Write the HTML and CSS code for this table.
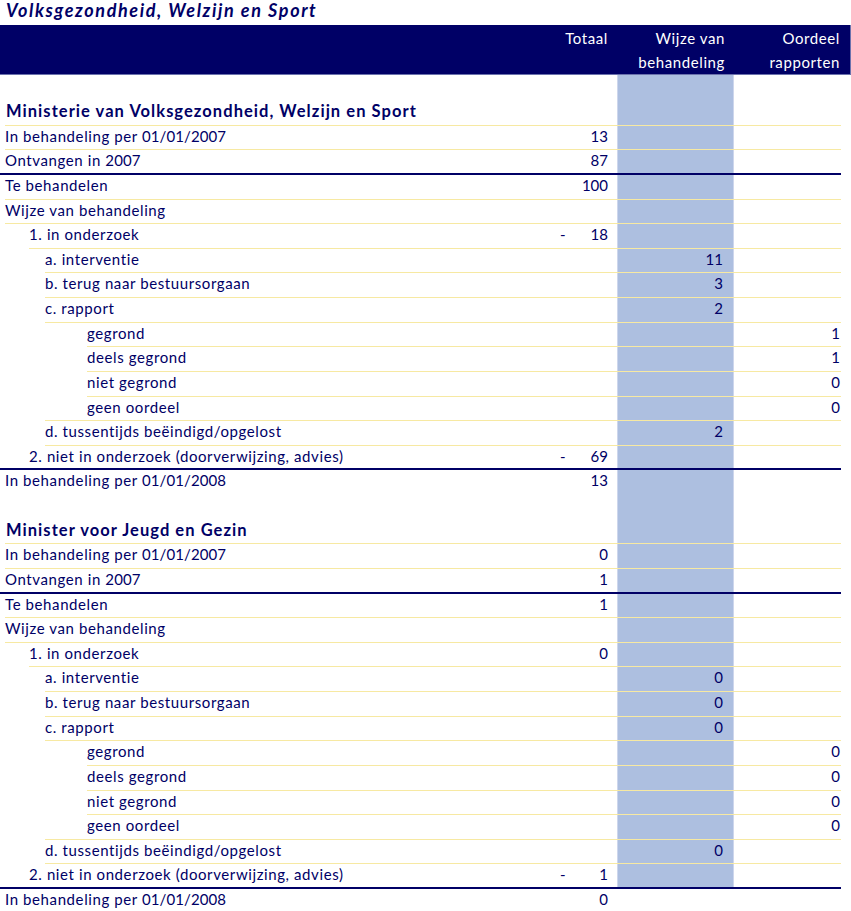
FILE: index.html
```html
<!DOCTYPE html>
<html lang="nl">
<head>
<meta charset="utf-8">
<title>Volksgezondheid, Welzijn en Sport</title>
<link rel="stylesheet" href="styles.css">
</head>
<body>
<div class="sheet">
  <div class="title">Volksgezondheid, Welzijn en Sport</div>
  <div class="head">
    <div></div>
    <div class="h-tot">Totaal</div>
    <div class="h-wij">Wijze van<br>behandeling</div>
    <div class="h-oor">Oordeel<br>rapporten</div>
    <div></div>
  </div>

  <div class="row none gap"><div class="lab"></div><div class="tot"></div><div class="wij"></div><div class="oor"></div></div>

  <!-- Section 1 -->
  <div class="row head-row"><div class="lab">Ministerie van Volksgezondheid, Welzijn en Sport</div><div class="tot"></div><div class="wij"></div><div class="oor"></div></div>
  <div class="row"><div class="lab">In behandeling per <span class="d">01/01/2007</span></div><div class="tot"><span class="n">13</span></div><div class="wij"></div><div class="oor"></div></div>
  <div class="row nav ls0"><div class="lab p5">Ontvangen in <span class="d">2007</span></div><div class="tot"><span class="n">87</span></div><div class="wij"></div><div class="oor"></div></div>
  <div class="row"><div class="lab">Te behandelen</div><div class="tot"><span class="n">100</span></div><div class="wij"></div><div class="oor"></div></div>
  <div class="row"><div class="lab">Wijze van behandeling</div><div class="tot"></div><div class="wij"></div><div class="oor"></div></div>
  <div class="row ls29"><div class="lab">1. in onderzoek</div><div class="tot"><span class="m">-</span><span class="n">18</span></div><div class="wij"></div><div class="oor"></div></div>
  <div class="row ls45"><div class="lab">a. interventie</div><div class="tot"></div><div class="wij">11</div><div class="oor"></div></div>
  <div class="row ls45"><div class="lab">b. terug naar bestuursorgaan</div><div class="tot"></div><div class="wij">3</div><div class="oor"></div></div>
  <div class="row ls45"><div class="lab">c. rapport</div><div class="tot"></div><div class="wij">2</div><div class="oor"></div></div>
  <div class="row ls87"><div class="lab">gegrond</div><div class="tot"></div><div class="wij"></div><div class="oor">1</div></div>
  <div class="row ls87"><div class="lab">deels gegrond</div><div class="tot"></div><div class="wij"></div><div class="oor">1</div></div>
  <div class="row ls87"><div class="lab">niet gegrond</div><div class="tot"></div><div class="wij"></div><div class="oor">0</div></div>
  <div class="row ls45"><div class="lab p42">geen oordeel</div><div class="tot"></div><div class="wij"></div><div class="oor">0</div></div>
  <div class="row ls45"><div class="lab">d. tussentijds beëindigd/opgelost</div><div class="tot"></div><div class="wij">2</div><div class="oor"></div></div>
  <div class="row nav ls0"><div class="lab p29">2. niet in onderzoek (doorverwijzing, advies)</div><div class="tot"><span class="m">-</span><span class="n">69</span></div><div class="wij"></div><div class="oor"></div></div>
  <div class="row none"><div class="lab">In behandeling per <span class="d">01/01/2008</span></div><div class="tot"><span class="n">13</span></div><div class="wij"></div><div class="oor"></div></div>
  <div class="row none"><div class="lab"></div><div class="tot"></div><div class="wij"></div><div class="oor"></div></div>

  <!-- Section 2 -->
  <div class="row head-row"><div class="lab">Minister voor Jeugd en Gezin</div><div class="tot"></div><div class="wij"></div><div class="oor"></div></div>
  <div class="row"><div class="lab">In behandeling per <span class="d">01/01/2007</span></div><div class="tot"><span class="n">0</span></div><div class="wij"></div><div class="oor"></div></div>
  <div class="row nav ls0"><div class="lab p5">Ontvangen in <span class="d">2007</span></div><div class="tot"><span class="n">1</span></div><div class="wij"></div><div class="oor"></div></div>
  <div class="row"><div class="lab">Te behandelen</div><div class="tot"><span class="n">1</span></div><div class="wij"></div><div class="oor"></div></div>
  <div class="row"><div class="lab">Wijze van behandeling</div><div class="tot"></div><div class="wij"></div><div class="oor"></div></div>
  <div class="row ls29"><div class="lab">1. in onderzoek</div><div class="tot"><span class="n">0</span></div><div class="wij"></div><div class="oor"></div></div>
  <div class="row ls45"><div class="lab">a. interventie</div><div class="tot"></div><div class="wij">0</div><div class="oor"></div></div>
  <div class="row ls45"><div class="lab">b. terug naar bestuursorgaan</div><div class="tot"></div><div class="wij">0</div><div class="oor"></div></div>
  <div class="row ls45"><div class="lab">c. rapport</div><div class="tot"></div><div class="wij">0</div><div class="oor"></div></div>
  <div class="row ls87"><div class="lab">gegrond</div><div class="tot"></div><div class="wij"></div><div class="oor">0</div></div>
  <div class="row ls87"><div class="lab">deels gegrond</div><div class="tot"></div><div class="wij"></div><div class="oor">0</div></div>
  <div class="row ls87"><div class="lab">niet gegrond</div><div class="tot"></div><div class="wij"></div><div class="oor">0</div></div>
  <div class="row ls45"><div class="lab p42">geen oordeel</div><div class="tot"></div><div class="wij"></div><div class="oor">0</div></div>
  <div class="row ls45"><div class="lab">d. tussentijds beëindigd/opgelost</div><div class="tot"></div><div class="wij">0</div><div class="oor"></div></div>
  <div class="row nav ls0"><div class="lab p29">2. niet in onderzoek (doorverwijzing, advies)</div><div class="tot"><span class="m">-</span><span class="n">1</span></div><div class="wij"></div><div class="oor"></div></div>
  <div class="row none"><div class="lab">In behandeling per <span class="d">01/01/2008</span></div><div class="tot"><span class="n">0</span></div><div class="plain"></div><div class="oor"></div></div>
</div>
</body>
</html>
```

FILE: styles.css
```css
* {
  box-sizing: border-box;
}

html,
body {
  margin: 0;
  padding: 0;
  background: #ffffff;
}

body {
  width: 851px;
  font-family: Lato, "Open Sans", "Noto Sans", sans-serif;
  font-size: 15px;
  color: #000066;
  overflow: hidden;
}

.title {
  height: 25px;
  padding-left: 6px;
  font-size: 18px;
  font-weight: 700;
  font-style: italic;
  letter-spacing: 1.6px;
  line-height: 21.6px;
  white-space: nowrap;
}

.head {
  display: grid;
  grid-template-columns: 555px 62px 117px 107px 10px;
  height: 49.5px;
  padding-top: 0.5px;
  background: #000066;
  color: #ffffff;
  line-height: 24.5px;
  letter-spacing: 0.6px;
  text-align: right;
  border-bottom: 1px solid #6b72ad;
  border-right: 1px solid #6b72ad;
}

.h-tot {
  padding-right: 9px;
}

.h-wij {
  padding-right: 9px;
}

.h-oor {
  padding-right: 1px;
}

.row {
  --ls: 5px;
  display: grid;
  grid-template-columns: calc(555px - var(--ls)) 62px 117px 107px;
  margin-left: var(--ls);
  width: calc(841px - var(--ls));
  height: 24.64px;
  line-height: 20.4px;
  border-bottom: 1px solid #f7e9a2;
  white-space: nowrap;
}

.row.nav {
  border-bottom: 2px solid #000066;
}

.row.none {
  border-bottom: 0;
}

.row.gap {
  height: 26.6px;
}

.lab {
  letter-spacing: 0.6px;
}

.lab .d {
  letter-spacing: 0.1px;
}

.row.head-row {
  font-size: 16.5px;
  font-weight: 700;
  line-height: 21.6px;
}

.row.head-row .lab {
  padding-left: 1px;
  letter-spacing: 1.05px;
}

.ls0 {
  --ls: 0px;
}

.ls29 {
  --ls: 29px;
}

.ls45 {
  --ls: 45px;
}

.ls87 {
  --ls: 87px;
}

.p5 {
  padding-left: 5px;
}

.p29 {
  padding-left: 29px;
}

.p42 {
  padding-left: 42px;
}

.tot {
  display: flex;
  padding: 0 9px 0 5px;
}

.tot .n {
  margin-left: auto;
}

.wij {
  background: #adbfe0;
  border-left: 1px solid #cdd6ec;
  border-right: 1px solid #cdd6ec;
  text-align: right;
  padding-right: 10px;
}

.oor {
  text-align: right;
  padding-right: 1px;
}
```
